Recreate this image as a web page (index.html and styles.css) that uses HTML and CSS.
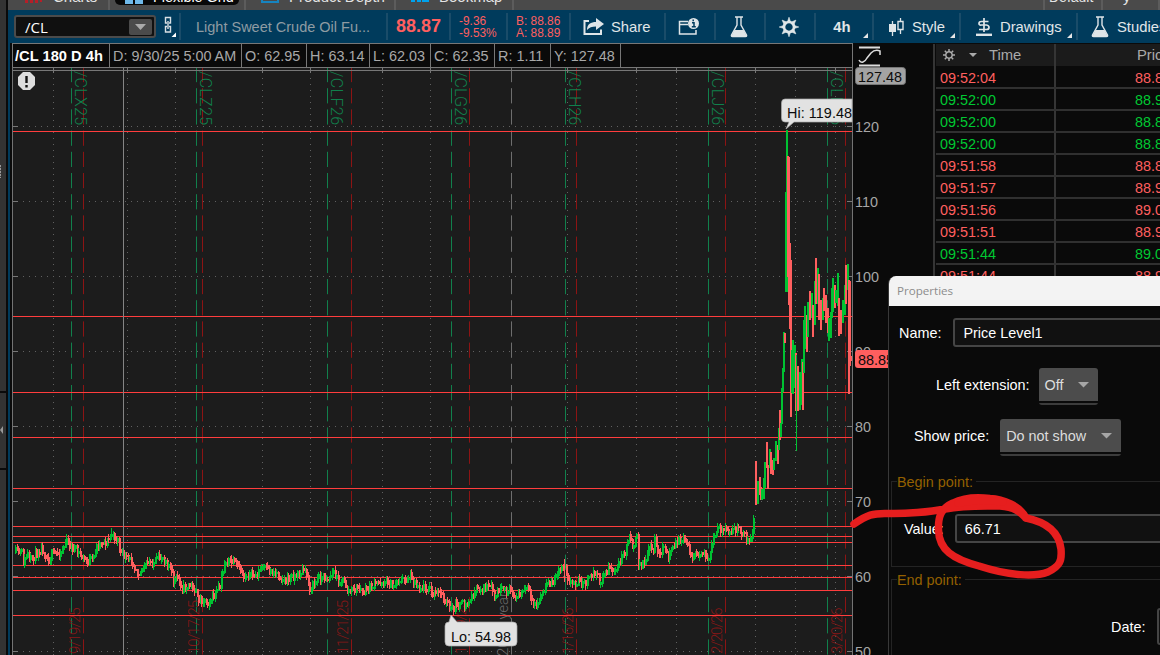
FILE: index.html
```html
<!DOCTYPE html>
<html lang="en">
<head>
<meta charset="utf-8">
<title>/CL Charts</title>
<link rel="stylesheet" href="styles.css">
</head>
<body>
<div class="app">
  <aside class="rail">
    <div class="rail-top"><span class="grip"></span></div>
    <div class="rail-mid"><svg width="4" height="8" viewBox="0 0 4 8"><path d="M0 4L3 0V8Z" fill="#999"/></svg></div>
    <div class="rail-bottom"></div>
  </aside>
  <div class="workspace">
    <nav class="tabs">
      <div class="tab w-charts"><svg class="tab-icon" width="18" height="3"><path d="M0 0h3v3h-3zM5 0h3v3h-3zM10 0h3v3h-3zM15 0h2v2h-2z" fill="#b51f28"/></svg><span>Charts</span></div>
      <div class="tab w-grid"><div class="pill"><svg class="tab-icon" width="18" height="4"><path d="M0 0h8v4H0zM10 0h8v4h-8z" fill="#6fb9ea"/></svg><span>Flexible Grid</span></div></div>
      <div class="tab w-depth"><svg class="tab-icon" width="18" height="3"><path d="M1 0V2H17V0" fill="none" stroke="#1684c0" stroke-width="2"/></svg><span>Product Depth</span></div>
      <div class="tab w-book"><svg class="tab-icon" width="18" height="2"><path d="M0 0h4v2H0zM6 0h4v2H6zM11 0h7v2h-7z" fill="#00a2ed"/></svg><span>Bookmap</span></div>
      <div class="tab w-space"></div>
      <div class="tab w-default"><span>Default</span></div>
      <div class="tab w-last"><span>y</span></div>
    </nav>
    <header class="toolbar">
      <div class="tool w-symbol">
        <div class="symbol"><span>/CL</span><div class="symbol-drop"><svg width="12" height="6"><path d="M0 0H11L5.5 6Z" fill="#aaa"/></svg></div></div>
        <svg class="link" width="14" height="22" viewBox="0 0 14 22" fill="none" stroke="#d8e0e4" stroke-width="1.4"><path d="M3 7H1.500V1.500H6.500V7H5M3 10.500H1.500V16H6.500V10.500H5M4 5V13"/><path d="M12 16.500V21H7.500Z" fill="#fff" stroke="none"/></svg>
      </div>
      <div class="tool w-desc desc">Light Sweet Crude Oil Fu...</div>
      <div class="tool w-last-price last-price">88.87</div>
      <div class="tool w-change quote"><span>-9.36</span><span>-9.53%</span></div>
      <div class="tool w-bid quote"><span>B: 88.86</span><span>A: 88.89</span></div>
      <div class="tool w-share">
        <svg width="22" height="18" viewBox="0 0 22 18"><path d="M6 3H1.500V16H18V11.500" fill="none" stroke="#dfe5e8" stroke-width="2"/><path d="M4 12C4 6 8 4 13 4V0L21 6L13 12V8.500C9 8.500 6 9.500 4 12Z" fill="#dfe5e8"/></svg>
        <span>Share</span>
      </div>
      <div class="tool w-info center"><svg width="22" height="18" viewBox="0 0 22 18"><path d="M10 3.500H1.500V16H18V12M1.500 6.500H10" fill="none" stroke="#dfe5e8" stroke-width="1.500"/><circle cx="15.500" cy="5.500" r="5.500" fill="#dfe5e8"/><path d="M14 4.800H16V8.500M13.800 8.700H17.800M15.200 1.500V3.300" stroke="#003b5c" stroke-width="1.500" fill="none"/></svg></div>
      <div class="tool w-flask center"><svg width="18" height="22" viewBox="0 0 18 22"><path d="M5 1H13M7 1V9L1.500 19Q1 20.500 2.500 20.500H15.500Q17 20.500 16.500 19L11 9V1" fill="none" stroke="#dfe5e8" stroke-width="1.400"/><path d="M4.500 14H13.500L17 20.500H1Z" fill="#dfe5e8"/></svg></div>
      <div class="tool w-gear center"><svg width="20" height="20" viewBox="-10 -10 20 20"><circle r="5" fill="none" stroke="#dfe5e8" stroke-width="2.600"/><path d="M-1.600-5L0-9.800L1.600-5ZM-1.600 5L0 9.800L1.600 5ZM-5-1.600L-9.800 0L-5 1.600ZM5-1.600L9.800 0L5 1.600ZM-5-2.500L-6.900-6.900L-2.500-5ZM5-2.500L6.900-6.900L2.500-5ZM-5 2.500L-6.900 6.900L-2.500 5ZM5 2.500L6.900 6.900L2.500 5Z" fill="#dfe5e8" stroke="#dfe5e8" stroke-width=".6"/></svg></div>
      <div class="tool w-period center"><b>4h</b><i class="corner"></i></div>
      <div class="tool w-style"><svg width="16" height="18" viewBox="0 0 16 18"><path d="M3.500 3V18M11.500 0V16" stroke="#dfe5e8" stroke-width="1.300"/><path d="M0 6h7v8H0z" fill="#dfe5e8"/><path d="M9 3.500h5v8H9z" fill="#003b5c" stroke="#dfe5e8" stroke-width="1.400"/></svg><span>Style</span><i class="corner"></i></div>
      <div class="tool w-draw"><svg width="18" height="20" viewBox="0 0 18 20"><path d="M13.500 4.500H6.500Q4 4.500 4 6.500T6.500 8H11.500Q14 8.500 14 10.500T11.500 12.500H4M9 1V15" fill="none" stroke="#dfe5e8" stroke-width="1.700"/><path d="M1 17.800H17" stroke="#dfe5e8" stroke-width="2.400"/></svg><span>Drawings</span><i class="corner"></i></div>
      <div class="tool w-studies"><svg width="18" height="22" viewBox="0 0 18 22"><path d="M5 1H13M7 1V9L1.500 19Q1 20.500 2.500 20.500H15.500Q17 20.500 16.500 19L11 9V1" fill="none" stroke="#dfe5e8" stroke-width="1.400"/><path d="M4.500 14H13.500L17 20.500H1Z" fill="#dfe5e8"/></svg><span>Studies</span></div>
    </header>
    <main class="panels">
      <section class="chart-panel">
        <div class="ohlc">
          <div class="cell c-title">/CL 180 D 4h</div><div class="cell c-date">D: 9/30/25 5:00 AM</div><div class="cell c-open">O: 62.95</div><div class="cell c-high">H: 63.14</div><div class="cell c-low">L: 62.03</div><div class="cell c-close">C: 62.35</div><div class="cell c-range">R: 1.11</div><div class="cell c-y">Y: 127.48</div><div class="rest"></div>
          <svg class="scale-icon" width="24" height="24" viewBox="0 0 24 24"><path d="M1 4.500H22M1 22.500H22" stroke="#ddd" stroke-width="2"/><path d="M1 17C3 21 7 19 9 15L13 10Q17 6 22 8V12" fill="none" stroke="#ddd" stroke-width="1.500"/></svg>
        </div>
        <svg class="chart" width="921" height="588" viewBox="12 67 921 588">
          <rect x="12" y="67" width="841" height="588" fill="#1c1c1c"/>
          <g id="grid"></g>
          <g id="contracts"></g>
          <g id="levels"></g>
          <g id="bars" shape-rendering="crispEdges"></g>
          <path d="M123.500 67V655" stroke="#858585"/>
          <path d="M12 67.500H852M12 70.500H852" stroke="#777"/>
          <path d="M12.500 67V655M852.500 67V655" stroke="#737373"/>
          <path d="M23 72h7l5 5v8l-5 5h-7l-5-5v-8z" fill="#ddd"/>
          <path d="M26.500 76V83M26.500 85V87.500" stroke="#111" stroke-width="2.400"/>
          <path d="M852 99H785Q781.500 99 781.500 103V118Q781.500 122 785 122H789L786 129L794 122H852Z" fill="#e2e2e2" stroke="#aaa" stroke-width=".7"/>
          <text x="787" y="118" class="tip" textLength="65">Hi: 119.48</text>
          <path d="M449 622L451 615L457 622H513Q517 622 517 626V642Q517 646 513 646H449Q445 646 445 642V626Q445 622 449 622Z" fill="#e2e2e2" stroke="#aaa" stroke-width=".7"/>
          <text x="451" y="642" class="tip" textLength="60">Lo: 54.98</text>
          <g id="axis" class="axis"></g>
          <rect x="855.500" y="67.500" width="50" height="17" rx="3" fill="#a3a3a3" stroke="#777"/>
          <text x="858" y="82" class="tip">127.48</text>
          <rect x="855" y="350" width="60" height="18" rx="3" fill="#ff5f5f"/>
          <text x="858" y="365" class="tip">88.85</text>
        </svg>
      </section>
      <section class="tape">
        <div class="tape-head"><svg width="14" height="14" viewBox="-7 -7 14 14"><circle r="3.200" fill="none" stroke="#aaa" stroke-width="1.500"/><path d="M0-6V-3M0 6V3M-6 0H-3M6 0H3M-4.200-4.200L-2-2M4.200-4.200L2-2M-4.200 4.200L-2 2M4.200 4.200L2 2" stroke="#aaa" stroke-width="1.500"/></svg><svg class="tri" width="8" height="5"><path d="M0 0H8L4 4Z" fill="#aaa"/></svg><span class="h-time">Time</span><span class="h-price">Price</span></div>
        <div class="trade down"><span>09:52:04</span><span>88.8</span></div>
        <div class="trade up"><span>09:52:00</span><span>88.9</span></div>
        <div class="trade up"><span>09:52:00</span><span>88.8</span></div>
        <div class="trade up"><span>09:52:00</span><span>88.8</span></div>
        <div class="trade down"><span>09:51:58</span><span>88.8</span></div>
        <div class="trade down"><span>09:51:57</span><span>88.9</span></div>
        <div class="trade down"><span>09:51:56</span><span>89.0</span></div>
        <div class="trade down"><span>09:51:51</span><span>88.9</span></div>
        <div class="trade up"><span>09:51:44</span><span>89.0</span></div>
        <div class="trade down"><span>09:51:44</span><span>88.9</span></div>
      </section>
    </main>
  </div>
  <div class="dialog">
    <div class="dialog-title">Properties</div>
    <div class="dialog-body">
      <div class="row row-name"><label>Name:</label><div class="input">Price Level1</div></div>
      <div class="row row-ext"><label>Left extension:</label><div class="select s-off"><span>Off</span><svg width="11" height="6"><path d="M0 0H11L5.500 5.500Z" fill="#a6a6a6"/></svg></div></div>
      <div class="row row-show"><label>Show price:</label><div class="select s-show"><span>Do not show</span><svg width="11" height="6"><path d="M0 0H11L5.500 5.500Z" fill="#a6a6a6"/></svg></div></div>
      <div class="group g-begin"><div class="legend">Begin point:</div><div class="row row-value"><label>Value:</label><div class="input">66.71</div></div></div>
      <div class="group g-end"><div class="legend">End point:</div><div class="row row-date"><label>Date:</label><div class="input"></div></div></div>
    </div>
  </div>
  <svg class="marker" width="1160" height="655"><path d="M854 524C867 515 873 513 888 513.500C905 514 930 512 945 509C965 505 985 506 1000 506C1015 507 1020 512 1026 518C1020 506 1003 499 990 498.500C978 497 963 498 953 503C940 509 938 518 938.500 530C939 550 953 559 979 566C1010 576 1035 577 1048 572C1060 566 1062 561 1061 549C1059 532 1046 522 1026 518"/><path d="M958 503Q980 499 1003 502"/></svg>
</div>
<script src="chart.js"></script>
</body>
</html>
```

FILE: styles.css
```css
* { box-sizing: border-box; }
body { margin: 0; background: #0a0a0a; font: 14.4px "Liberation Sans", Arial, sans-serif; color: #fff; }
.app { position: relative; display: flex; width: 1160px; height: 655px; overflow: hidden; }
svg { display: block; flex: none; }

.rail { width: 8px; flex: none; display: flex; flex-direction: column; gap: 2px; border-right: 2px solid #0a0a0a; background: #0a0a0a; }
.rail > div { background: #333; }
.rail-top { height: 391px; padding-top: 165px; }
.grip { display: block; width: 1px; height: 13px; background: repeating-linear-gradient(#999 0 2px, #444 2px 3px); }
.rail-mid { height: 75px; padding-top: 33px; }
.rail-bottom { flex: 1; }
.workspace { flex: 1; min-width: 0; display: flex; flex-direction: column; overflow: hidden; }

.tabs { height: 10px; flex: none; display: flex; background: #4a4a4a; overflow: hidden; }
.tab { height: 10px; flex: none; display: flex; align-items: flex-start; border-right: 2px solid #5c5c5c; font-size: 15px; color: #e4e4e4; white-space: nowrap; }
.tab span { line-height: 18px; margin-top: -12px; }
.tab-icon { margin-right: 10px; }
.w-charts { width: 102px; padding-left: 17px; }
.w-grid { width: 136px; padding-left: 5px; }
.pill { display: flex; width: 124px; height: 5px; padding-left: 10px; background: #080808; border-radius: 0 0 5px 5px; }
.pill span { color: #fff; font-size: 14.4px; }
.w-depth { width: 150px; padding-left: 15px; }
.w-book { width: 118px; padding-left: 15px; }
.w-space { width: 531px; }
.w-default { width: 58px; padding-left: 4px; font-size: 14px; }
.w-last { width: 57px; padding-left: 20px; }

.toolbar { height: 33px; flex: none; display: flex; align-items: center; background: #003b5c; color: #e0e6e9; font-size: 14.8px; }
.tool { position: relative; height: 27px; flex: none; display: flex; align-items: center; border-right: 2px solid #1a4c69; white-space: nowrap; }
.tool > span { position: static; padding-top: 1px; }
.center { justify-content: center; }
.w-symbol { width: 173px; padding-left: 6px; }
.symbol { width: 142px; height: 23px; display: flex; align-items: center; justify-content: space-between; border: 2px solid #4b4b4b; border-radius: 3px; background: #101010; color: #fff; padding: 0 2px 0 9px; font-family: "Open Sans", sans-serif; font-size: 15px; }
.symbol-drop { width: 23px; height: 16px; display: grid; place-items: center; background: #4b4b4b; border-radius: 2px; }
.link { margin-left: 8px; }
.w-desc { width: 207px; padding: 1px 0 0 15px; }
.desc { color: #8e9ba3; font-size: 14.5px; }
.w-last-price { width: 63px; padding-left: 8px; }
.last-price { color: #ff5f5f; font-size: 18px; font-weight: bold; }
.w-change { width: 57px; padding-left: 8px; }
.w-bid { width: 63px; padding-left: 8px; }
.quote { flex-direction: column; align-items: flex-start; justify-content: center; color: #ff5f5f; font-size: 11.9px; line-height: 12px; }
.quote > span { padding: 0; }
.w-share { width: 95px; padding-left: 12px; gap: 6px; }
.w-info, .w-flask, .w-gear { width: 50px; padding-right: 2px; }
.w-period { width: 58px; padding-right: 4px; }
.w-style { width: 87px; padding-left: 15px; gap: 7px; }
.w-draw { width: 117px; padding-left: 14px; gap: 7px; }
.w-studies { flex: 1; padding-left: 13px; gap: 8px; border: 0; }
.corner { position: absolute; right: 4px; bottom: 2px; width: 5px; height: 5px; background: #e6e6e6; clip-path: polygon(100% 0, 100% 100%, 0 100%); }

.panels { flex: 1; display: flex; min-height: 0; }
.chart-panel { width: 925px; flex: none; border-left: 2px solid #003b5c; padding-left: 2px; background: #0a0a0a; }
.ohlc { height: 24px; display: flex; border-left: 1px solid #777; }
.cell { height: 24px; flex: none; border: solid #777; border-width: 1px 1px 0 0; line-height: 24px; padding-left: 3px; font-size: 14.4px; color: #a8a8a8; white-space: nowrap; }
.c-title { width: 97px; font-weight: bold; font-size: 14.7px; color: #fff; padding-left: 2px; }
.c-date { width: 132px; }
.c-open { width: 65px; }
.c-high { width: 63px; }
.c-low { width: 61px; }
.c-close { width: 64px; }
.c-range { width: 56px; }
.c-y { width: 70px; }
.rest { width: 232px; border: solid #777; border-width: 1px 1px 0 0; }
.scale-icon { margin-left: 5px; }
.tip { font-size: 14.4px; fill: #0c0c0c; }
.axis { font-size: 14.4px; fill: #a6a6a6; }
.contract { font: 300 16px Roboto, "Liberation Sans", sans-serif; fill: #11804c; }
.expiry { font: 300 15px Roboto, "Liberation Sans", sans-serif; fill: #861717; }
.year { fill: #6a6a6a; }

.tape { flex: 1; min-width: 0; margin-top: 1px; border-left: 2px solid #353535; padding-left: 1px; background: linear-gradient(#353535, #353535) 119px 0 / 2px 100% no-repeat #0a0a0a; overflow: hidden; }
.tape-head { height: 22px; display: flex; align-items: center; padding-left: 6px; margin-bottom: 1px; background: linear-gradient(#353535, #353535) 118px 0 / 2px 100% no-repeat #1b1b1b; color: #aaa; font-size: 14.8px; }
.tri { margin-left: 13px; }
.h-time { margin-left: 12px; width: 148px; flex: none; }
.trade { height: 22px; display: flex; align-items: center; padding: 2px 0 0 4px; border-bottom: 2px solid #303030; }
.trade span:first-child { width: 195px; flex: none; }
.up { color: #00c832; }
.down { color: #ff5f5f; }

.dialog { position: absolute; left: 888px; top: 276px; width: 290px; height: 400px; border-left: 1px solid #383838; border-radius: 8px 0 0 0; overflow: hidden; background: #0a0a0a; }
.dialog-title { height: 30px; padding-left: 8px; background: #f3f3f3; color: #8c8c8c; font: 11.6px/30px "Open Sans", sans-serif; }
.dialog-body { display: flex; flex-direction: column; }
.row { display: flex; align-items: center; flex: none; white-space: nowrap; }
.input { height: 29px; flex: 1; border: 2px solid #454545; border-radius: 3px; background: #111; padding-left: 8px; line-height: 26px; }
.row-name { margin-top: 12px; padding-left: 10px; gap: 12px; }
.row-ext { margin-top: 21px; padding-left: 47px; gap: 9px; }
.row-show { margin-top: 14px; padding-left: 25px; gap: 11px; }
.row-ext label, .row-show label { padding-bottom: 3px; }
.select { height: 37px; display: flex; align-items: center; justify-content: space-between; padding: 0 9px 3px 6px; border-radius: 3px; background: linear-gradient(#4c4c4c 0 33px, #0a0a0a 33px 35px, #3c3c3c 35px 37px); color: #ddd; }
.s-off { width: 59px; }
.s-show { width: 121px; }
.group { margin-left: 2px; border: 1px solid #242424; border-right: 0; }
.legend { width: max-content; margin: -8px 0 0 5px; padding-right: 3px; line-height: 17px; background: #0a0a0a; color: #946000; }
.g-begin { margin-top: 25px; height: 86px; }
.row-value { margin-top: 23px; padding-left: 12px; gap: 11px; }
.g-end { margin-top: 12px; height: 110px; }
.row-date { margin-top: 19px; padding-left: 219px; gap: 12px; }
.row-date .input { height: 37px; }
.marker { position: absolute; left: 0; top: 0; fill: none; stroke: #e61e1e; stroke-width: 7.5; stroke-linecap: round; stroke-linejoin: round; }
```

FILE: chart.js
```js
const NS = 'http://www.w3.org/2000/svg';
function add(parent, tag, attrs, text) {
  const el = document.createElementNS(NS, tag);
  for (const k in attrs) el.setAttribute(k, attrs[k]);
  if (text) el.textContent = text;
  document.getElementById(parent).appendChild(el);
}
const line = (parent, d, stroke, dash) =>
  add(parent, 'path', Object.assign({ d, stroke, 'stroke-width': 1, fill: 'none' }, dash ? { 'stroke-dasharray': dash } : {}));

// Price grid and axis labels
[120, 110, 100, 90, 80, 70, 60, 50].forEach((p, i) => {
  const y = 126.5 + i * 75;
  line('grid', `M23 ${y}H847`, '#606060', '1 5');
  line('grid', `M13 ${y}H18M847 ${y}H852`, '#777');
  add('axis', 'text', { x: 855, y: y + 5.5 }, String(p));
});
[53, 127, 175, 262, 310, 382, 430, 567, 636, 676, 755, 795, 835].forEach(x => {
  line('grid', `M${x + .5} 72V655`, '#606060', '1 5');
  line('grid', `M${x + .5} 67V73`, '#777');
});
line('grid', 'M511.5 67V655', '#6e6e6e', '15.2 6');

// Contract rolls and expirations
[[71, 83, '/CLX25', '9/19/25', 81, 75], [196, 202, '/CLZ25', '10/17/25', 206, 194],
 [327, 351, '/CLF26', '11/21/25', 337, 343], [451, 469, '/CLG26', '12/19/25', 461, 461],
 [565, 576, '/CLH26', '1/16/26', 575, 568], [708, 725, '/CLJ26', '2/20/26', 718, 717],
 [827, 845, '/CLK26', '3/20/26', 837, 837]].forEach(([g, r, name, date, nx, dx]) => {
  line('contracts', `M${g + .5} 67V655`, '#11804c', '15.2 6');
  line('contracts', `M${r + .5} 67V655`, '#8c1414', '15.2 6');
  add('contracts', 'text', { class: 'contract', transform: `translate(${nx - 6} 71) rotate(90)`, textLength: 54 }, name);
  add('contracts', 'text', { class: 'expiry', transform: `translate(${dx + 5} 654) rotate(-90)`, textLength: date.length === 8 ? 54 : 46.5 }, date);
});
add('contracts', 'text', { class: 'expiry year', transform: 'translate(508 656) rotate(-90)', textLength: 64 }, '2026 year');

[131, 316, 392, 437, 488, 526, 536, 542, 565, 577, 590, 615].forEach(y => line('levels', `M13 ${y + .5}H852`, '#ff3d3d'));

// Price bars
const UP = '#00c232', DOWN = '#ff5f5f';
const bar = (x, top, bottom, up, w) =>
  add('bars', 'rect', { x, y: top, width: w, height: Math.max(2, bottom - top), fill: up ? UP : DOWN });
const track = [16,552,21,553,23,562,27,555,29,561,35,554,41,548,46,556,49,562,51,554,58,554,66,542,70,546,76,551,82,558,87,561,92,560,96,547,101,541,106,543,111,534,113,537,117,540,120,553,126,559,131,561,137,572,143,567,148,563,154,562,161,557,165,560,170,568,172,583,174,580,177,578,182,589,188,585,193,587,197,599,201,599,207,602,213,596,219,588,224,563,230,561,236,565,240,571,243,576,250,574,255,576,262,567,268,571,276,573,280,577,285,581,290,577,297,575,303,570,306,575,309,588,315,582,318,577,322,577,328,578,333,572,337,581,343,580,347,591,352,591,358,587,362,593,368,588,374,585,380,582,387,582,392,587,397,580,404,580,411,575,414,583,420,588,428,587,432,595,440,593,446,603,451,612,455,604,460,604,466,606,471,597,476,590,484,588,491,588,494,598,498,590,505,592,511,590,516,598,520,594,527,587,531,604,537,605,540,596,544,590,548,582,553,583,557,571,564,564,567,577,571,584,578,581,583,585,588,579,594,572,599,581,603,575,609,567,615,573,619,561,624,552,629,534,632,545,636,538,638,565,645,562,649,546,653,552,654,540,656,547,660,555,664,547,668,558,671,545,677,542,683,538,688,548,691,556,698,556,703,549,707,560,709,560,712,542,718,528,722,529,727,533,731,530,738,529,745,537,748,545,752,535,753,519,755,521];
const valueAt = x => {
  let k = 0;
  while (k < track.length - 4 && track[k + 2] <= x) k += 2;
  return track[k + 1] + (x - track[k]) / (track[k + 2] - track[k]) * (track[k + 3] - track[k + 1]);
};
let seed = 11;
const rnd = () => (seed = (seed * 16807) % 2147483647) / 2147483647;
let prev = 552;
for (let i = 0, x = 15; x < 754; x += i++ % 2 ? 1 : 2) {
  const y = valueAt(Math.max(16, x)) + (rnd() - .5) * 8;
  const up = y < prev, top = Math.min(y, prev), bottom = Math.max(y, prev);
  bar(x, Math.round(top - 1), Math.round(bottom + 1), up, 2);
  bar(x, Math.round(top - 1 - rnd() * 4), Math.round(bottom + 1 + rnd() * 4), up, 1);
  prev = y;
}
bar(111, 528, 540, 1, 1);
bar(564, 559, 582, 0, 1);
[[755,461,505,0],[757,481,504,1],[759,477,495,0],[760,487,500,0],[761,489,500,1],[763,478,499,1],[764,462,488,1],[766,442,468,0],[767,465,489,0],[769,449,468,1],[770,452,474,0],[772,460,475,0],[773,458,470,1],[775,441,461,1],[777,445,464,0],[778,428,450,1],[779,410,440,0],[780,423,437,1],[781,388,424,1],[782,368,392,1],[783,332,372,1],[784,333,343,0],[785,192,292,1],[786,130,292,1],[787,156,277,0],[788,157,305,0],[789,243,329,0],[790,260,417,0],[791,350,393,1],[792,340,394,1],[794,345,388,1],[795,353,411,0],[796,355,451,1],[797,366,411,0],[799,372,410,1],[801,359,405,1],[802,362,410,0],[803,320,373,1],[804,306,349,1],[806,315,352,0],[807,302,337,1],[809,291,320,0],[811,293,318,1],[812,305,337,0],[814,281,325,1],[815,258,304,0],[817,268,304,1],[818,274,320,0],[820,300,330,0],[822,298,320,1],[823,288,311,0],[825,295,323,0],[827,308,333,0],[828,318,341,1],[830,312,338,1],[831,288,318,1],[832,278,312,1],[834,285,308,0],[835,290,303,1],[837,273,306,1],[838,298,336,0],[840,310,334,0],[842,300,323,1],[844,285,315,1],[845,265,304,0],[847,264,290,1],[848,280,394,0],[849,281,366,0],[850,356,361,0]].forEach(([x, a, b, up]) => bar(x, a, b, up, x === 796 ? 1 : 2));
```
